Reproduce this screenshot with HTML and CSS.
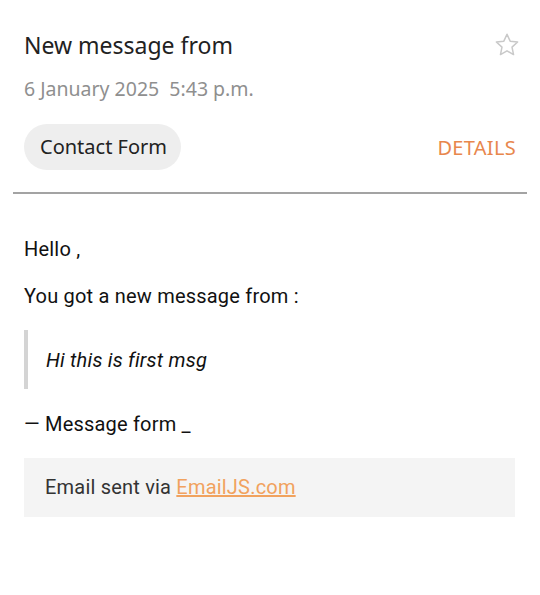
FILE: index.html
```html
<!DOCTYPE html>
<html lang="en">
  <head>
    <meta charset="UTF-8" />
    <meta name="viewport" content="width=device-width, initial-scale=1.0" />
    <title>New message from</title>
    <link rel="stylesheet" href="styles.css">
  </head>
  <body>
    <div class="mail-header">
      <div class="title-row">
        <h1>New message from</h1>
        <svg class="star" width="28" height="28" viewBox="0 0 24 24">
          <path d="M12 2.8l2.7 5.9 6.4.7-4.8 4.4 1.3 6.4L12 17l-5.6 3.2 1.3-6.4-4.8-4.4 6.4-.7z"
                fill="none" stroke="#c9c9c9" stroke-width="1.3" stroke-linejoin="round" />
        </svg>
      </div>
      <div class="date">6 January 2025&nbsp; 5:43 p.m.</div>
      <div class="meta-row">
        <span class="chip">Contact Form</span>
        <span class="details">DETAILS</span>
      </div>
    </div>

    <hr class="divider" />

    <div class="mail-body">
      <p>Hello ,</p>
      <p>You got a new message from :</p>
      <blockquote>Hi this is first msg</blockquote>
      <p>— Message form _</p>
      <div class="footer-note">
        Email sent via <a href="#">EmailJS.com</a>
      </div>
    </div>
  </body>
</html>
```

FILE: styles.css
```css
* {
  margin: 0;
  padding: 0;
  box-sizing: border-box;
}

body {
  background: #fff;
  font-family: "Noto Sans", "Open Sans", sans-serif;
}

.mail-header {
  padding: 29px 24px 0 24px;
}

.title-row {
  display: flex;
  justify-content: space-between;
  align-items: center;
}

h1 {
  font-size: 23px;
  font-weight: 400;
  line-height: 32px;
  color: #222;
}

.star {
  margin-right: -5px;
}

.date {
  margin-top: 15px;
  font-size: 19.5px;
  line-height: 26px;
  color: #8f8f8f;
}

.meta-row {
  margin-top: 22px;
  display: flex;
  justify-content: space-between;
  align-items: center;
}

.chip {
  background: #eeeeee;
  border-radius: 23px;
  height: 46px;
  line-height: 46px;
  padding: 0 14px 0 16px;
  font-size: 20px;
  color: #222;
}

.details {
  font-size: 20px;
  letter-spacing: 0.3px;
  color: #e8874d;
}

.divider {
  margin: 22px 13px 0 13px;
  border: none;
  height: 2px;
  background: #a3a3a3;
}

.mail-body {
  padding: 42px 24px 0 24px;
  font-family: Roboto, "Noto Sans", sans-serif;
  font-size: 20px;
  letter-spacing: 0.2px;
  line-height: 26px;
  color: #111;
}

.mail-body p {
  margin-bottom: 21px;
}

blockquote {
  border-left: 4px solid #d4d4d4;
  padding: 17px 0 16px 18px;
  font-style: italic;
  margin-bottom: 22px;
}

.footer-note {
  background: #f4f4f4;
  padding: 16px 21px 17px 21px;
  margin-right: 1px;
  color: #333;
}

.footer-note a {
  color: #f1a25e;
}
```
